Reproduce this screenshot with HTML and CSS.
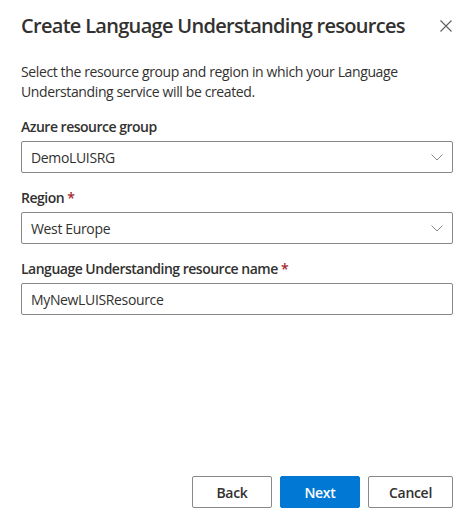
FILE: index.html
```html
<!DOCTYPE html>
<html>
<head>
  <title>Create Language Understanding resources</title>
  <link rel="stylesheet" href="styles.css">
</head>
<body>
  <div class="dialog">
    <!-- Заголовок -->
    <div class="dialog-header">
      <h1 class="dialog-title">Create Language Understanding resources</h1>
      <button class="close-button" aria-label="Close">
        <svg width="12" height="12" viewBox="0 0 12 12"><path d="M0.5 0.5 L11.5 11.5 M11.5 0.5 L0.5 11.5" stroke="#605e5c" stroke-width="1.1" fill="none"/></svg>
      </button>
    </div>

    <p class="description">Select the resource group and region in which your Language Understanding service will be created.</p>

    <!-- Поля формы -->
    <div class="field">
      <label class="field-label">Azure resource group</label>
      <div class="dropdown">
        <span class="dropdown-text">DemoLUISRG</span>
        <svg class="chevron" width="12" height="7" viewBox="0 0 12 7"><path d="M0.5 0.5 L6 6 L11.5 0.5" stroke="#8a8886" stroke-width="1" fill="none"/></svg>
      </div>
    </div>

    <div class="field">
      <label class="field-label">Region <span class="required">*</span></label>
      <div class="dropdown">
        <span class="dropdown-text">West Europe</span>
        <svg class="chevron" width="12" height="7" viewBox="0 0 12 7"><path d="M0.5 0.5 L6 6 L11.5 0.5" stroke="#8a8886" stroke-width="1" fill="none"/></svg>
      </div>
    </div>

    <div class="field">
      <label class="field-label">Language Understanding resource name <span class="required">*</span></label>
      <input class="text-input" type="text" value="MyNewLUISResource">
    </div>

    <!-- Кнопки -->
    <div class="dialog-footer">
      <button class="btn">Back</button>
      <button class="btn btn-primary">Next</button>
      <button class="btn">Cancel</button>
    </div>
  </div>
</body>
</html>
```
FILE: styles.css
```css
/* Общие стили */
body {
  margin: 0;
  background-color: #fff;
  font-family: "Open Sans", "Noto Sans", Arial, sans-serif;
  color: #323130;
}

.dialog {
  height: 528px;
  box-sizing: border-box;
  padding: 12px 20px 20px 21px;
  display: flex;
  flex-direction: column;
}

/* Заголовок */
.dialog-header {
  display: flex;
  align-items: center;
  justify-content: space-between;
}

.dialog-title {
  margin: 0;
  font-size: 20px;
  font-weight: 600;
  line-height: 28px;
  letter-spacing: -0.7px;
}

.close-button {
  background: none;
  border: none;
  padding: 0;
  margin-right: 1px;
  width: 12px;
  height: 12px;
  display: flex;
  cursor: pointer;
}

.description {
  margin: 22px 0 0 0;
  font-size: 14px;
  line-height: 20px;
  letter-spacing: -0.38px;
  padding-right: 20px;
}

/* Поля */
.field {
  padding-top: 15px;
}

.field-label {
  display: block;
  font-size: 14px;
  font-weight: 600;
  line-height: 20px;
  margin-bottom: 4px;
  letter-spacing: -0.5px;
}

.required {
  color: #a4262c;
}

.dropdown,
.text-input {
  box-sizing: border-box;
  width: 100%;
  height: 32px;
  border: 1px solid #8a8886;
  border-radius: 2px;
  padding: 0 10px 0 9px;
  font-family: inherit;
  font-size: 14px;
  color: #323130;
  letter-spacing: -0.35px;
}

.dropdown {
  display: flex;
  align-items: center;
  justify-content: space-between;
}

.chevron {
  margin-right: -1px;
}

.text-input {
  outline: none;
}

/* Кнопки */
.dialog-footer {
  margin-top: auto;
  display: flex;
  justify-content: flex-end;
  gap: 8px;
}

.btn {
  min-width: 80px;
  height: 32px;
  padding: 0 20px;
  box-sizing: border-box;
  background-color: #fff;
  border: 1px solid #8a8886;
  border-radius: 2px;
  font-family: inherit;
  font-size: 14px;
  font-weight: 600;
  color: #323130;
  letter-spacing: -0.3px;
  cursor: pointer;
}

.btn-primary {
  background-color: #0078d4;
  border-color: #0078d4;
  color: #fff;
}
```
